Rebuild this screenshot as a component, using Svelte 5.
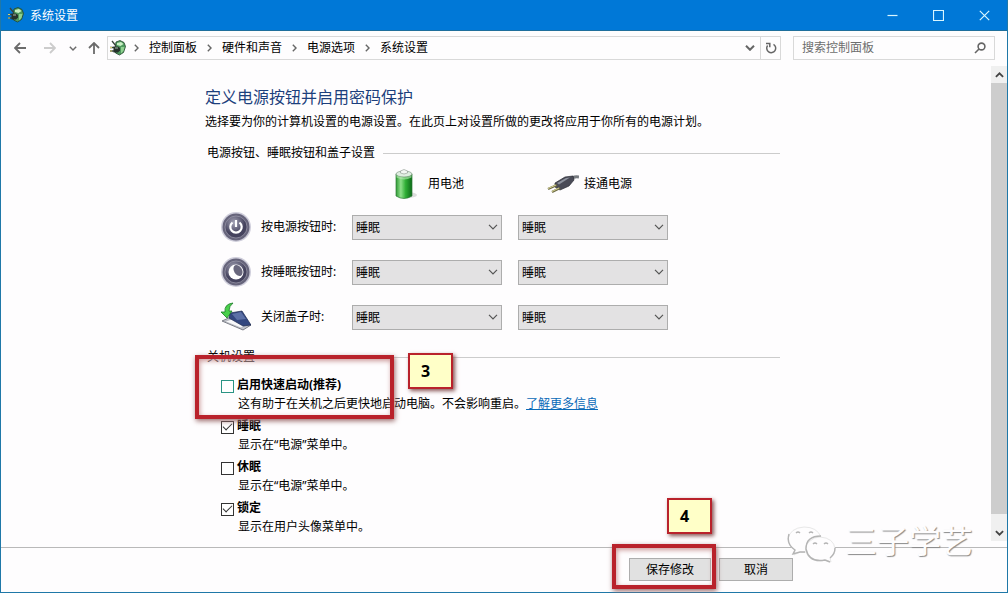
<script lang="ts">
  const crumbs = ['控制面板', '硬件和声音', '电源选项', '系统设置'];
  const actions = ['睡眠', '休眠', '关机', '不采取任何操作'];

  let rows = $state([
    { id: 'power', label: '按电源按钮时:', battery: '睡眠', plugged: '睡眠' },
    { id: 'sleep', label: '按睡眠按钮时:', battery: '睡眠', plugged: '睡眠' },
    { id: 'lid', label: '关闭盖子时:', battery: '睡眠', plugged: '睡眠' }
  ]);

  let options = $state([
    { id: 'fast', label: '启用快速启动(推荐)', hint: '这有助于在关机之后更快地启动电脑。不会影响重启。', link: '了解更多信息', on: false },
    { id: 'sleep', label: '睡眠', hint: '显示在“电源”菜单中。', link: '', on: true },
    { id: 'hibernate', label: '休眠', hint: '显示在“电源”菜单中。', link: '', on: false },
    { id: 'lock', label: '锁定', hint: '显示在用户头像菜单中。', link: '', on: true }
  ]);

  let query = $state('');
</script>

{#snippet appIcon()}
  <svg class="app-icon" viewBox="0 0 16 16" aria-hidden="true">
    <path d="M6 2l4-1.500 4 2 1.500 4-2 6-4 2.500-4-2L5 9z" fill="#4f9a5e" stroke="#24452c" stroke-width=".8" />
    <path d="M7 3l4-1 2.500 2-3 2-3.500-1z" fill="#c8efc3" />
    <path d="M11 7h3.500l-1 4-2.500 2.500z" fill="#8fd18f" />
    <path d="M2 1l4 5M0 7.500h4M0 11h4" stroke="#39453c" stroke-width="1.300" />
    <path d="M3.500 6.500h4.500l2 1.500v2.500l-2 2H3.500z" fill="#26322b" />
    <path d="M5 7.500h3v1H5z" fill="#a9b8aa" />
    <path d="M0 7.500h2M0 11h2" stroke="#d9cf6a" />
  </svg>
{/snippet}

{#snippet chevron()}
  <svg class="chevron" viewBox="0 0 10 6" aria-hidden="true"><path d="M1 .8l4 4 4-4" /></svg>
{/snippet}

{#snippet picker(row, key, name)}
  <span class="picker">
    <select bind:value={row[key]} aria-label={`${row.label} ${name}`}>
      {#each actions as action}<option>{action}</option>{/each}
    </select>
    {@render chevron()}
  </span>
{/snippet}

<div class="window">
  <header class="titlebar">
    {@render appIcon()}
    <span class="title">系统设置</span>
    <button aria-label="最小化"><svg viewBox="0 0 11 11"><path d="M.5 5.500h10" /></svg></button>
    <button aria-label="最大化"><svg viewBox="0 0 11 11"><path d="M.5.5h10v10H.5z" /></svg></button>
    <button aria-label="关闭"><svg viewBox="0 0 11 11"><path d="M.8.8l9.400 9.400M10.200.8L.8 10.200" /></svg></button>
  </header>

  <nav class="toolbar">
    <button class="nav" aria-label="后退"><svg viewBox="0 0 12 12"><path d="M12 6H1M6 1L1 6l5 5" /></svg></button>
    <button class="nav forward" aria-label="前进" disabled><svg viewBox="0 0 12 12"><path d="M0 6h11M6 1l5 5-5 5" /></svg></button>
    <button class="nav recent" aria-label="最近的位置">{@render chevron()}</button>
    <button class="nav parent" aria-label="向上"><svg viewBox="0 0 12 12"><path d="M6 12V1M1 6l5-5 5 5" /></svg></button>
    <div class="address">
      {@render appIcon()}
      <ol>
        {#each crumbs as crumb}
          <li>
            <svg viewBox="0 0 5 8" aria-hidden="true"><path d="M.8.8L4 4 .8 7.200" /></svg>
            <a href="#top">{crumb}</a>
          </li>
        {/each}
      </ol>
      <button class="drop" aria-label="历史记录">{@render chevron()}</button>
      <button class="refresh" aria-label="刷新">
        <svg viewBox="0 0 12 12"><path d="M8.500 2.300A4.500 4.500 0 1 1 2.600 3.500M1 1.500h3.800V5.300" /></svg>
      </button>
    </div>
    <div class="search">
      <input type="text" bind:value={query} placeholder="搜索控制面板" aria-label="搜索控制面板" />
      <svg viewBox="0 0 12 12" aria-hidden="true"><circle cx="7.500" cy="4.500" r="3.400" /><path d="M5 7L1 11" /></svg>
    </div>
  </nav>

  <div class="body">
    <main>
      <h1>定义电源按钮并启用密码保护</h1>
      <p class="intro">选择要为你的计算机设置的电源设置。在此页上对设置所做的更改将应用于你所有的电源计划。</p>

      <section>
        <h2>电源按钮、睡眠按钮和盖子设置</h2>
        <div class="sources">
          <div class="source battery">
            <svg viewBox="0 0 24 32" aria-hidden="true">
              <defs>
                <linearGradient id="cell">
                  <stop offset="0" stop-color="#2f9a35" />
                  <stop offset=".3" stop-color="#8ee08a" />
                  <stop offset=".6" stop-color="#2fae35" />
                  <stop offset="1" stop-color="#0c6a18" />
                </linearGradient>
              </defs>
              <ellipse cx="15" cy="27" rx="9" ry="3" fill="#ddd" />
              <path d="M3 6v22q8 5 16 0V6z" fill="url(#cell)" stroke="#2e7a38" stroke-width=".7" />
              <ellipse cx="11" cy="6" rx="8" ry="3" fill="#dfeee0" stroke="#7f9a84" stroke-width=".7" />
              <path d="M7.500 5V3q3.500-3 7 0v2q-3.500 2-7 0z" fill="#f3f7f3" stroke="#8b968d" stroke-width=".6" />
              <path d="M3.500 7.500q7.500 4 15 0v2q-7.500 4-15 0z" fill="#b9e9b6" opacity=".6" />
            </svg>
            用电池
          </div>
          <div class="source plug">
            <svg viewBox="0 0 32 20" aria-hidden="true">
              <path d="M22 6q4-4 10-3" fill="none" stroke="#777b80" stroke-width="3" />
              <path d="M8 9l10-6 8-1 1 4-5 6-9 4-5-3z" fill="#4a4b57" stroke="#2b2c35" stroke-width=".7" />
              <path d="M10 9l9-5 4-.5-11 7z" fill="#8e939e" />
              <path d="M10 11l-9 4M13 14l-8 4" stroke="#6d6a45" stroke-width="2.400" />
              <path d="M9 11l-8 3.500M12 14l-7 3.500" stroke="#d9d694" />
            </svg>
            接通电源
          </div>
        </div>

        <div class="rows">
          {#each rows as row (row.id)}
            <div class="row">
              {#if row.id === 'lid'}
                <svg class="row-icon" viewBox="0 0 30 30" aria-hidden="true">
                  <path d="M1 19l11-5 18 9-8 5z" fill="#c4c6ce" stroke="#62656e" stroke-width=".8" />
                  <path d="M4 19.500l8-3 12 7-4 2.500z" fill="#f8f8fa" stroke="#999ca5" stroke-width=".5" />
                  <path d="M9 11l12-2 9 14-8 1-14-8z" fill="#33477f" stroke="#1b284f" stroke-width=".7" />
                  <path d="M11 12l9-2 5 7-9 1z" fill="#5c70a6" />
                  <path d="M12 1Q3 2 4 10H0l6 6 5-7H8q0-5 4-8z" fill="#49cf4b" stroke="#167a22" stroke-width=".8" />
                </svg>
              {:else}
                <svg class="row-icon" viewBox="0 0 30 30" aria-hidden="true">
                  <defs>
                    <radialGradient id={`dome-${row.id}`} cx=".4" cy=".3">
                      <stop offset="0" stop-color="#a5a4b6" />
                      <stop offset="1" stop-color="#45435e" />
                    </radialGradient>
                  </defs>
                  <circle cx="15" cy="15" r="15" fill="#cfcedb" />
                  <circle cx="15" cy="15" r="13.500" fill="#66647b" />
                  <circle cx="15" cy="15" r="11" fill={`url(#dome-${row.id})`} stroke="#9d9cae" stroke-width=".7" />
                  {#if row.id === 'power'}
                    <path d="M11.500 10.500a5.700 5.700 0 1 0 7 0M15 8v7" fill="none" stroke="#fff" stroke-width="2.200" />
                  {:else}
                    <circle cx="15" cy="15" r="7.500" fill="#fff" />
                    <ellipse cx="17" cy="13.500" rx="4" ry="6" transform="rotate(-30 17 13.500)" fill="#69677d" />
                  {/if}
                </svg>
              {/if}
              <span class="row-label">{row.label}</span>
              <div class="pickers">
                {@render picker(row, 'battery', '用电池')}
                {@render picker(row, 'plugged', '接通电源')}
              </div>
            </div>
          {/each}
        </div>
      </section>

      <section class="shutdown">
        <h2>关机设置</h2>
        {#each options as option (option.id)}
          <div class="option">
            <input type="checkbox" id={`opt-${option.id}`} class:hot={option.id === 'fast'} bind:checked={option.on} />
            <label for={`opt-${option.id}`}>{option.label}</label>
            <p>{option.hint}{#if option.link}<a href="#more">{option.link}</a>{/if}</p>
          </div>
        {/each}
        <div class="frame frame-3"></div>
        <div class="note note-3">3</div>
      </section>
    </main>

    <div class="scrollbar" aria-hidden="true">
      <span class="cap up">{@render chevron()}</span>
      <span class="thumb"></span>
      <span class="cap">{@render chevron()}</span>
    </div>
  </div>

  <footer>
    <div class="save">
      <button>保存修改</button>
      <div class="frame frame-4"></div>
      <div class="note note-4">4</div>
    </div>
    <button class="cancel">取消</button>
    <div class="watermark">
      <svg viewBox="0 0 50 38" aria-hidden="true">
        <path class="bubble" d="M19 26q-3 1-6 0l-6 3 1-5Q1 20 1 13 3 2 17 1q13 0 17 10L19 26z" />
        <path class="bubble" d="M33 11q14 1 15 12 0 6-5 9l1 4-5-2q-12 3-18-4-6-9 2-15 4-4 10-4z" />
        <path d="M2 8Q-1 18 8 24l-2 4 7-2h5" />
        <path d="M34 10q-15 0-15 13 3 14 19 11l5 2M43 32q5-4 5-10" />
        <path d="M9 7q2-2 4 0M22 7q2-2 4 0M26 18q2-2 4 0M37 18q2-2 4 0" />
      </svg>
      <span>三子学艺</span>
    </div>
  </footer>
</div>

<style>
  :global(body) { margin: 0; background: #fff; }
  .window { box-sizing: border-box; min-height: 100vh; display: flex; flex-direction: column; border: 1px solid #1f78a8; border-top: 0;
    background: #fefdfe; color: #000; font: 12px/20px "Noto Sans", "Noto Sans CJK SC", sans-serif; }
  button, input, select { font: inherit; color: inherit; margin: 0; }
  button { padding: 0; border: 0; background: none; }
  h1, h2, p, ol { margin: 0; padding: 0; font-weight: 400; }
  svg { display: block; flex: none; }

  .titlebar { display: flex; align-items: center; height: 30px; padding-left: 7px; background: #0078d7; color: #fff; border-bottom: 1px solid #1f6f9c; }
  .title { flex: 1; padding: 2px 0 0 6px; }
  .titlebar button { display: grid; place-items: center; width: 46px; height: 30px; }
  .titlebar button svg { width: 11px; height: 11px; fill: none; stroke: #d8f6ff; stroke-width: 1.2; }
  .app-icon { width: 16px; height: 16px; }

  .chevron { width: 10px; height: 6px; fill: none; stroke: #555; stroke-width: 1.2; }

  .toolbar { display: flex; align-items: center; padding: 5px 12px 6px 13px; }
  .nav { margin-right: 18px; }
  .nav svg { width: 12px; height: 12px; fill: none; stroke: #6b6b6b; stroke-width: 1.8; }
  .nav.forward { margin-right: 13px; }
  .nav.forward svg { stroke: #ccc; }
  .nav.recent { margin-right: 11px; }
  .nav.recent .chevron { width: 8px; height: 5px; }
  .nav.parent { margin-right: 7px; }
  .address { flex: 1; display: flex; align-items: center; height: 22px; border: 1px solid #d9d9d9; padding-left: 2px; margin-right: 12px; }
  ol { flex: 1; display: flex; list-style: none; padding-left: 8px; }
  li { display: flex; align-items: center; margin-right: 10px; }
  li svg { width: 5px; height: 8px; fill: none; stroke: #666; stroke-width: 1.4; margin-right: 10px; }
  li a { color: #000; text-decoration: none; }
  .drop, .refresh { display: grid; place-items: center; width: 20px; height: 22px; }
  .drop .chevron { stroke: #666; stroke-width: 2; }
  .refresh { border-left: 1px solid #d9d9d9; }
  .refresh svg { width: 12px; height: 12px; fill: none; stroke: #666; stroke-width: 1.5; }
  .search { box-sizing: border-box; display: flex; align-items: center; width: 202px; height: 24px; border: 1px solid #d9d9d9; padding: 0 8px; }
  .search input { flex: 1; min-width: 0; border: 0; padding: 0; background: none; outline: 0; }
  .search input::placeholder { color: #6d6d6d; opacity: 1; }
  .search svg { width: 12px; height: 12px; fill: none; stroke: #666; stroke-width: 1.6; }

  .body { flex: 1; display: flex; justify-content: space-between; }
  main { width: 575px; padding: 19px 16px 8px 204px; }
  h1 { font-size: 16px; line-height: 24px; color: #1c3f7c; }
  .intro { margin-top: 3px; white-space: nowrap; }
  h2 { display: flex; align-items: center; gap: 8px; font-size: 12px; line-height: 20px; padding-left: 2px; margin-top: 11px; }
  h2::after { content: ''; flex: 1; border-top: 1px solid #ccc; }

  .sources { display: grid; grid-template-columns: 154px 1fr; padding-left: 188px; margin-top: 5px; }
  .source { display: flex; align-items: center; height: 32px; }
  .battery { gap: 11px; }
  .battery svg { width: 24px; height: 32px; }
  .plug { gap: 5px; }
  .plug svg { width: 32px; height: 20px; }

  .rows { display: grid; gap: 15px; padding-left: 16px; margin-top: 12px; }
  .row { display: grid; grid-template-columns: 30px 81px 1fr; align-items: center; column-gap: 10px; height: 30px; }
  .row-icon { width: 30px; height: 30px; }
  .row-label { white-space: nowrap; }
  .pickers { display: grid; grid-template-columns: 150px 150px; gap: 16px; }
  .picker { display: grid; align-items: center; }
  .picker select { grid-area: 1 / 1; width: 100%; height: 25px; appearance: none; border: 1px solid #adadad; border-radius: 0; background: #e3e2e3; padding: 2px 3px 0; }
  .picker .chevron { grid-area: 1 / 1; justify-self: end; margin-right: 4px; pointer-events: none; }

  .shutdown { position: relative; }
  .shutdown h2 { margin: 15px 0 8px; gap: 132px; }
  .option { display: grid; grid-template-columns: 13px 1fr; column-gap: 3px; align-items: center; padding-left: 16px; margin-bottom: 3px; }
  .option input { appearance: none; box-sizing: border-box; width: 13px; height: 13px; margin-top: 2px; border: 1px solid #333; background: #fff; display: grid; place-items: center; }
  .option input.hot { border-color: #2a9484; }
  .option input:checked::after { content: ''; width: 8px; height: 4px; margin-bottom: 3px; border: solid #333; border-width: 0 0 1px 1px; transform: rotate(-45deg); }
  .option label { font-weight: 700; justify-self: start; }
  .option p { grid-column: 2; padding-left: 1px; line-height: 18px; }
  .option a { color: #0a6ab8; }

  .frame { box-sizing: border-box; position: absolute; border: 4px solid #b9222b; box-shadow: 1px 2px 5px #9a6a6a, inset 1px 2px 5px #c99; pointer-events: none; }
  .frame-3 { left: -10px; top: 8px; width: 199px; height: 64px; }
  .frame-4 { left: -17px; top: -14px; width: 104px; height: 45px; }
  .note { box-sizing: border-box; position: absolute; width: 45px; height: 36px; border: 2px solid #b9222b; background: #ffffc8; box-shadow: 2px 2px 4px #855;
    font: 700 16px/32px "Noto Sans", sans-serif; padding-left: 11px; }
  .note-3 { left: 203px; top: 6px; }
  .note-4 { left: 38px; top: -60px; }

  .scrollbar { display: flex; flex-direction: column; width: 16px; margin-bottom: 6px; background: #f0f0f0; }
  .cap { display: grid; place-items: center; height: 17px; }
  .cap .chevron { width: 9px; height: 6px; stroke: #444; stroke-width: 2; }
  .up .chevron { transform: rotate(180deg); }
  .thumb { flex: 1; background: #cdcdcd; margin-bottom: 10px; }

  footer { position: relative; display: flex; justify-content: flex-end; gap: 8px; padding: 10px 214px 11px 0; border-top: 1px solid #b9b9b9; }
  footer button { box-sizing: border-box; width: 74px; height: 23px; border: 1px solid #adadad; background: #e1e1e1; display: block; }
  .save { position: relative; }
  .save button { width: 82px; }
  .watermark { position: absolute; right: 34px; top: -30px; display: flex; align-items: center; gap: 8px; }
  .watermark svg { width: 50px; height: 38px; fill: none; stroke: #b4b4b4; stroke-width: 1.4; margin-top: 8px; }
  .watermark .bubble { fill: #fefdfe; stroke: #e8e8e8; stroke-width: 1; }
  .watermark span { font-size: 32px; line-height: 40px; color: #fefdfe; text-shadow: 1px 1px 1px #8a8a8a; }
</style>
